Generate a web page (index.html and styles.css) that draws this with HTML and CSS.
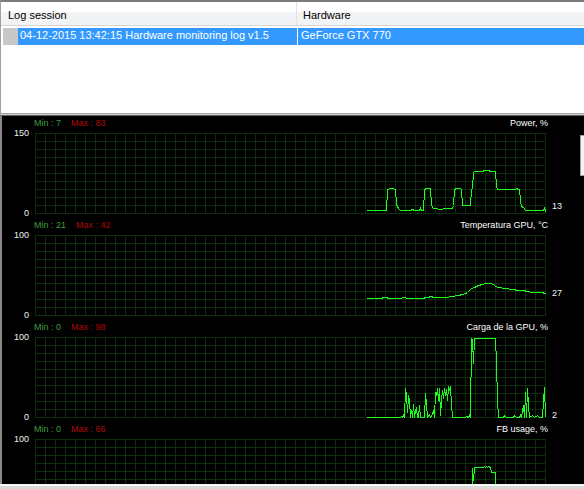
FILE: index.html
```html
<!DOCTYPE html>
<html>
<head>
<meta charset="utf-8">
<link rel="stylesheet" href="styles.css">
</head>
<body>
<div class="top">
  <div class="thead">
    <div class="th c1">Log session</div>
    <div class="th c2">Hardware</div>
  </div>
  <div class="row">
    <div class="rowhdr"></div>
    <div class="td c1">04-12-2015 13:42:15 Hardware monitoring log v1.5</div>
    <div class="td c2">GeForce GTX 770</div>
  </div>
</div>
<div class="split"></div>
<div class="graphs">
  <div class="graph">
    <div class="ghead"><span class="min">Min : 7</span><span class="max">Max : 83</span><span class="title">Power, %</span></div>
    <div class="gbody">
      <div class="axis"><span>150</span><span>0</span></div>
      <svg class="plot" width="511" height="81" shape-rendering="crispEdges">
        <g transform="translate(-34.5 -132.5)">
          <polyline class="line" points="366,210 386,210 387,189 390,188 393,188 394,189 395,189 396,204 398,208 400,210 410,210 412,209 414,210 419,210 420,208 421,210 423,210 424,189 426,188 430,188 431,205 433,208 435,208 440,209 445,208 452,208 453,205 454,189 456,188 460,188 461,189 462,205 470,205 471,189 472,188 473,172 474,171 482,171 484,170 488,170 490,171 495,171 496,186 497,189 510,189 515,189 516,188 518,189 519,189 520,200 521,206 523,207 525,210 540,210 543,210 544,208 545,210 546,207"/>
        </g>
      </svg>
      <span class="val" style="top:68px">13</span>
    </div>
  </div>
  <div class="graph">
    <div class="ghead"><span class="min">Min : 21</span><span class="max">Max : 42</span><span class="title">Temperatura GPU, °C</span></div>
    <div class="gbody">
      <div class="axis"><span>100</span><span>0</span></div>
      <svg class="plot" width="511" height="81" shape-rendering="crispEdges">
        <g transform="translate(-34.5 -234.5)">
          <polyline class="line" points="366,298 380,298 384,297 390,298 400,298 403,297 408,298 420,298 428,297 430,296 434,297 445,297 452,296 458,295 462,294 465,293 467,292 469,290 471,288 474,287 478,285 482,284 485,283 490,283 493,284 495,286 498,287 505,288 512,289 518,290 523,290 527,291 532,292 540,292 546,293"/>
        </g>
      </svg>
      <span class="val" style="top:53px">27</span>
    </div>
  </div>
  <div class="graph">
    <div class="ghead"><span class="min">Min : 0</span><span class="max">Max : 98</span><span class="title">Carga de la GPU, %</span></div>
    <div class="gbody">
      <div class="axis"><span>100</span><span>0</span></div>
      <svg class="plot" width="511" height="81" shape-rendering="crispEdges">
        <g transform="translate(-34.5 -336.5)">
          <polyline class="line" points="366,417 400,417 401,416 402,417 403,415 404,417 405,388 406,395 407,412 408,395 409,399 410,417 411,410 412,417 413,404 414,417 415,410 416,408 417,417 418,417 419,405 420,417 424,417 425,393 426,403 427,417 429,414 430,417 432,414 433,410 434,417 435,392 436,395 437,388 438,400 439,388 440,415 441,400 442,390 443,398 444,388 445,395 446,389 447,400 448,387 449,389 450,386 451,404 452,417 465,417 466,416 468,417 469,415 470,417 471,338 472,340 473,363 474,338 495,338 496,362 497,400 498,417 503,417 504,415 506,417 513,417 514,415 516,417 519,417 520,415 521,417 523,405 524,417 525,392 526,417 527,388 528,405 529,417 532,415 534,417 537,415 539,417 542,417 543,400 544,387 545,416 546,417"/>
        </g>
      </svg>
      <span class="val" style="top:73px">2</span>
    </div>
  </div>
  <div class="graph">
    <div class="ghead"><span class="min">Min : 0</span><span class="max">Max : 66</span><span class="title">FB usage, %</span></div>
    <div class="gbody">
      <div class="axis"><span>100</span><span class="blank"></span></div>
      <svg class="plot" width="511" height="81" shape-rendering="crispEdges">
        <g transform="translate(-34.5 -438.5)">
          <polyline class="line" points="366,519 471,519 472,468 473,480 474,467 483,467 484,466 485,467 486,466 487,467 488,466 490,467 491,472 495,472 496,519 546,519"/>
        </g>
      </svg>
    </div>
  </div>
  <div class="sb"></div>
</div>
<div class="bottom"></div>
</body>
</html>
```
FILE: styles.css
```css
html, body {
  margin: 0;
  padding: 0;
  background: #ffffff;
  width: 584px;
  height: 489px;
  overflow: hidden;
}
.top {
  height: 113px;
  box-sizing: border-box;
  border-top: 2px solid #7c7c7c;
  border-left: 1px solid #a0a0a0;
  background: #ffffff;
  font-family: "Liberation Sans", Arial, sans-serif;
  font-size: 11px;
  color: #000;
}
.thead {
  display: flex;
  height: 24px;
  box-sizing: border-box;
  border-bottom: 1px solid #d5d5d5;
  background: linear-gradient(#ffffff 0, #ffffff 45%, #f2f3f4 45%, #f2f3f4 100%);
}
.th {
  padding-top: 5px;
  line-height: 16px;
  white-space: nowrap;
}
.th.c1 {
  width: 296px;
  padding-left: 7px;
  box-sizing: border-box;
  border-right: 1px solid #e2e3e5;
}
.th.c2 {
  padding-left: 6px;
}
.row {
  display: flex;
  margin-top: 2px;
  height: 17px;
  margin-left: 2px;
}
.rowhdr {
  width: 15px;
  background: #c8c8c8;
}
.td {
  background: #3399ff;
  color: #ffffff;
  line-height: 15px;
  padding-bottom: 2px;
  white-space: nowrap;
}
.td.c1 {
  width: 279px;
  box-sizing: border-box;
  padding-left: 2px;
  margin-right: 1px;
}
.td.c2 {
  flex: 1;
  padding-left: 3px;
}
.split {
  height: 3px;
  box-sizing: border-box;
  border-top: 1px solid #a7a7a7;
  border-bottom: 1px solid #646464;
  background: #c9c9c9;
}
.graphs {
  position: relative;
  height: 368px;
  box-sizing: border-box;
  border-left: 2px solid #8a8a8a;
  background: #000000;
  overflow: hidden;
  font-family: "Liberation Sans", Arial, sans-serif;
  font-size: 9px;
}
.graph {
  height: 102px;
}
.ghead {
  display: flex;
  height: 17px;
  line-height: 14px;
  padding-left: 32px;
  width: 514px;
  white-space: nowrap;
}
.min {
  color: #3e9e3e;
  margin-right: 10px;
}
.max {
  color: #b00808;
}
.title {
  margin-left: auto;
  color: #ffffff;
}
.gbody {
  position: relative;
  display: flex;
  height: 81px;
}
.axis {
  width: 33px;
  box-sizing: border-box;
  padding-right: 6px;
  margin: -5px 0;
  display: flex;
  flex-direction: column;
  justify-content: space-between;
  align-items: flex-end;
  color: #f0f0f0;
  line-height: 11px;
}
.blank {
  height: 11px;
}
.plot {
  display: block;
  background-color: #000;
  background-image:
    linear-gradient(to right, #0c2e0c 1px, transparent 1px),
    linear-gradient(to bottom, #0c2e0c 1px, transparent 1px);
  background-size: 10px 8px;
}
.line {
  fill: none;
  stroke: #1cff1c;
  stroke-width: 1;
}
.val {
  position: absolute;
  left: 550px;
  line-height: 11px;
  color: #f0f0f0;
}
.sb {
  position: absolute;
  right: 0;
  top: 19px;
  width: 4px;
  height: 41px;
  box-sizing: border-box;
  background: #f4f4f4;
  border: 1px solid #a0a0a0;
  border-right: none;
}
.bottom {
  height: 5px;
  box-sizing: border-box;
  border-top: 2px solid #f8f8f8;
  background: #d9d9d9;
}
```
